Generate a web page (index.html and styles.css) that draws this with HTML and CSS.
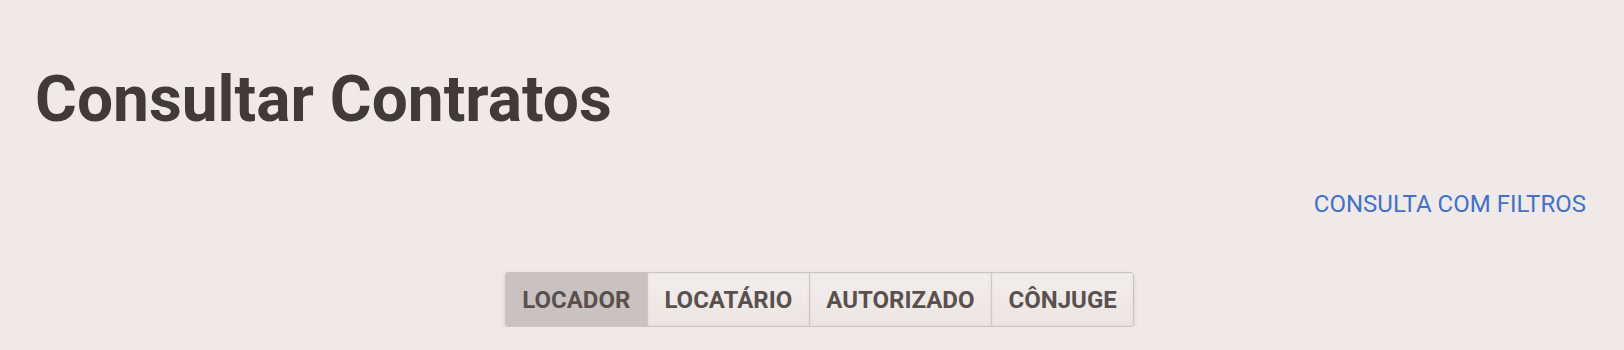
FILE: index.html
```html
<!DOCTYPE html>
<html lang="pt">
<head>
<meta charset="utf-8">
<link rel="stylesheet" href="styles.css">
</head>
<body>
<main class="page">
  <h1 class="title">Consultar Contratos</h1>
  <div class="actions">
    <a class="filter-link" href="#">CONSULTA COM FILTROS</a>
  </div>
  <div class="tabs-wrap">
    <div class="tabs">
      <button class="tab active">LOCADOR</button>
      <button class="tab">LOCATÁRIO</button>
      <button class="tab">AUTORIZADO</button>
      <button class="tab">CÔNJUGE</button>
    </div>
  </div>
</main>
</body>
</html>
```
FILE: styles.css
```css
html, body {
  margin: 0;
  padding: 0;
  background: #efeae9;
}
body {
  font-family: Roboto, "Liberation Sans", sans-serif;
  color: #403a39;
}
.page {
  padding: 0 38px 0 35px;
}
.title {
  margin: 0;
  padding-top: 62px;
  font-size: 64px;
  font-weight: 700;
  line-height: 76px;
  color: #403a39;
}
.actions {
  display: flex;
  justify-content: flex-end;
  margin-top: 53px;
}
.filter-link {
  font-size: 24px;
  color: #4471c3;
  text-decoration: none;
  line-height: 26px;
}
.tabs-wrap {
  display: flex;
  justify-content: center;
  margin-top: 55px;
  padding-left: 18px;
}
.tabs {
  display: flex;
  border: 1px solid #c9c3c2;
  border-radius: 3px;
  box-shadow: 0 2px 5px rgba(0,0,0,0.12);
  overflow: hidden;
}
.tab {
  font-family: Roboto, "Liberation Sans", sans-serif;
  font-weight: 700;
  font-size: 24px;
  color: #5a504e;
  background: linear-gradient(#f2eeed, #ebe5e3);
  border: none;
  border-left: 1px solid #cdc7c6;
  height: 53px;
  padding: 0 16.5px;
  margin: 0;
  box-shadow: inset 0 0 4px rgba(0,0,0,0.06);
}
.tab:first-child {
  border-left: none;
}
.tab.active {
  background: #c9c2c1;
  box-shadow: none;
}
```
